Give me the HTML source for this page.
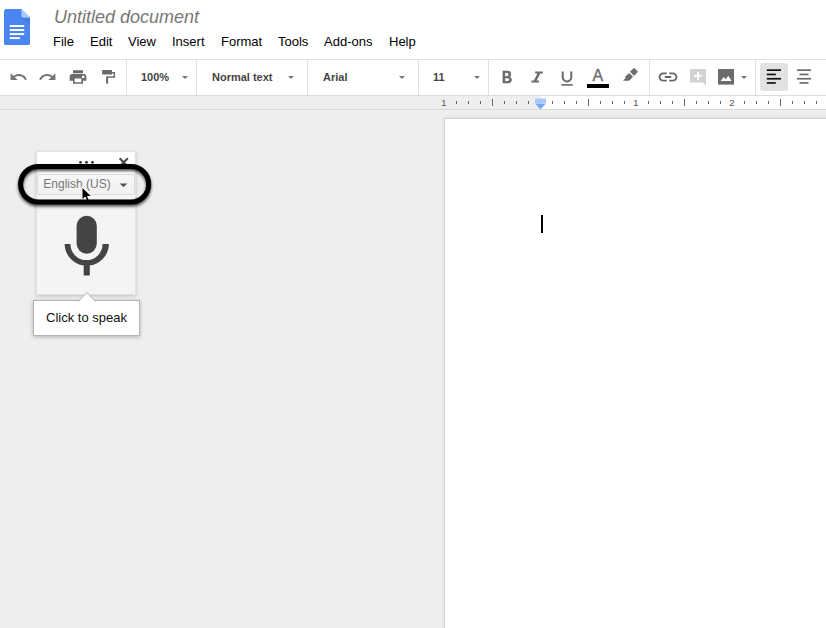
<!DOCTYPE html>
<html lang="en">
<head>
<meta charset="utf-8">
<title>Untitled document</title>
<style>
*{box-sizing:border-box;margin:0;padding:0}
html,body{width:826px;height:628px;overflow:hidden;background:#eeeeee;font-family:"Liberation Sans",Arial,sans-serif;}
.abs{position:absolute}
#header{position:absolute;left:0;top:0;width:826px;height:59px;background:#fff}
#title{position:absolute;left:54px;top:6px;font-size:18px;line-height:22px;font-style:italic;color:#777;white-space:nowrap}
.menu{position:absolute;top:34px;font-size:13px;line-height:16px;color:#000;white-space:nowrap}
#toolbar{position:absolute;left:0;top:59px;width:826px;height:37px;background:#fff;border-top:1px solid #e3e3e3;border-bottom:1px solid #dcdcdc}
.sep{position:absolute;top:0;width:1px;height:35px;background:#e0e0e0}
.tbt{position:absolute;top:11px;font-size:11px;line-height:13px;font-weight:bold;color:#444;white-space:nowrap}
.caret{position:absolute;margin-left:0.6px;top:16px;width:0;height:0;border-left:3px solid transparent;border-right:3px solid transparent;border-top:3px solid #777}
#ruler{position:absolute;left:0;top:96px;width:826px;height:14px;background:#eeeeee;border-bottom:1px solid #d9d9d9}
#rulerw{position:absolute;left:541px;top:0;width:285px;height:13px;background:#fff}
.rn{position:absolute;top:1px;font-size:9px;line-height:11px;color:#444}
#page{position:absolute;left:444px;top:118px;width:400px;height:520px;background:#fff;border:1px solid #d4d4d4;box-shadow:0 0 3px rgba(0,0,0,.12)}
#cursor{position:absolute;left:541px;top:215px;width:2px;height:18px;background:#000}
#panel{position:absolute;left:36px;top:151px;width:100px;height:144px;background:#f4f4f4;border:1px solid #e3e3e3;box-shadow:0 1px 3px rgba(0,0,0,.2)}
#panelhead{position:absolute;left:0;top:0;width:98px;height:22px;background:#fff}
#lang{position:absolute;left:37px;top:174px;width:98px;height:21px;background:linear-gradient(#f7f7f7,#f1f1f1);border:1px solid #dadada;border-radius:2px;font-size:12px;line-height:18.6px;color:#777;padding-left:5.3px}
#tip{position:absolute;left:33px;top:300px;width:107px;height:35.5px;background:#fff;border:1px solid #b4b4b4;box-shadow:0 1px 4px rgba(0,0,0,.25);font-size:13px;line-height:33px;text-align:center;color:#111}
</style>
</head>
<body>
<div id="header">
  <svg class="abs" style="left:4px;top:9px" width="26" height="36.4" viewBox="0 0 27 37" preserveAspectRatio="none">
    <path d="M2.5 0 H18 L27 9 V34.5 Q27 37 24.5 37 H2.5 Q0 37 0 34.5 V2.5 Q0 0 2.5 0 Z" fill="#4a86f0"/>
    <path d="M18 0 L27 9 H20.5 Q18 9 18 6.5 Z" fill="#a9c7fa"/>
    <path d="M18.3 9 H27 V17 Z" fill="#3a6fd0" opacity=".35"/>
    <rect x="6" y="16.3" width="15" height="2" fill="#fff"/>
    <rect x="6" y="20.4" width="15" height="2" fill="#fff"/>
    <rect x="6" y="24.5" width="15" height="2" fill="#fff"/>
    <rect x="6" y="28.6" width="10.6" height="2" fill="#fff"/>
  </svg>
  <div id="title">Untitled document</div>
  <div class="menu" style="left:53px">File</div>
  <div class="menu" style="left:90px">Edit</div>
  <div class="menu" style="left:128px">View</div>
  <div class="menu" style="left:172px">Insert</div>
  <div class="menu" style="left:221px">Format</div>
  <div class="menu" style="left:278px">Tools</div>
  <div class="menu" style="left:324px">Add-ons</div>
  <div class="menu" style="left:389px">Help</div>
</div>

<div id="toolbar">
  <div class="sep" style="left:126px"></div>
  <div class="sep" style="left:196px"></div>
  <div class="sep" style="left:307px"></div>
  <div class="sep" style="left:418px"></div>
  <div class="sep" style="left:488px"></div>
  <div class="sep" style="left:649px"></div>
  <div class="sep" style="left:755px"></div>

  <!-- undo / redo / print / paint format -->
  <svg class="abs" style="left:8.8px;top:8px" width="19" height="18" viewBox="0 0 24 24" preserveAspectRatio="none"><path fill="#757575" d="M12.5 8c-2.65 0-5.05.99-6.9 2.6L2 7v9h9l-3.62-3.62c1.39-1.16 3.16-1.88 5.12-1.88 3.54 0 6.55 2.31 7.6 5.5l2.37-.78C21.08 11.03 17.15 8 12.5 8z"/></svg>
  <svg class="abs" style="left:38.4px;top:8px" width="19" height="18" viewBox="0 0 24 24" preserveAspectRatio="none"><path fill="#757575" d="M18.4 10.6C16.55 8.99 14.15 8 11.5 8c-4.65 0-8.58 3.03-9.96 7.22L3.9 16c1.05-3.19 4.05-5.5 7.6-5.5 1.95 0 3.73.72 5.12 1.88L13 16h9V7l-3.6 3.6z"/></svg>
  <svg class="abs" style="left:68.2px;top:8px" width="20" height="18" viewBox="0 0 24 24" preserveAspectRatio="none"><path fill="#6b6b6b" fill-rule="evenodd" d="M19 8H5c-1.66 0-3 1.34-3 3v6h4v4h12v-4h4v-6c0-1.66-1.34-3-3-3z M16 19H8v-5h8z M16.8 10.4h2.8v2.8h-2.8z M18 3H6v4h12z"/></svg>
  <svg class="abs" style="left:100px;top:8px" width="18" height="18" viewBox="0 0 18 18"><rect x="2.1" y="1.9" width="9.9" height="4.7" rx="0.4" fill="#6b6b6b"/><path d="M12 4.7 H14.3 V9.1 H7.1" fill="none" stroke="#6b6b6b" stroke-width="1.5"/><rect x="6.1" y="8.5" width="2" height="7.2" fill="#6b6b6b"/></svg>
  <!-- B I U A -->
  <div class="abs" style="left:502px;top:8.4px;font-size:16.2px;line-height:18px;font-weight:bold;color:#6b6b6b;-webkit-text-stroke:0.6px #6b6b6b;transform:scaleX(.86);transform-origin:0 0">B</div>
  <svg class="abs" style="left:531px;top:11px" width="12" height="12" viewBox="0 0 12 12"><path fill="#6b6b6b" d="M4.2 0.4 H11.8 V2.4 H9.3 L5.7 9.5 H8 V11.5 H0.4 V9.5 H2.9 L6.5 2.4 H4.2 Z"/></svg>
  <svg class="abs" style="left:561px;top:11px" width="12" height="16" viewBox="0 0 12 16"><path fill="none" stroke="#6b6b6b" stroke-width="2" d="M1.7 0.4 V6.1 A4.3 4.3 0 0 0 10.3 6.1 V0.4"/><rect x="0.3" y="13.1" width="11.4" height="1.6" fill="#6b6b6b"/></svg>
  <div class="abs" style="left:592.6px;top:7px;font-size:16px;line-height:18px;color:#6b6b6b;-webkit-text-stroke:0.3px #6b6b6b">A</div>
  <div class="abs" style="left:587px;top:24px;width:22px;height:4px;background:#000"></div>
  <!-- highlighter -->
  <svg class="abs" style="left:622px;top:6px" width="18" height="16" viewBox="0 0 18 16"><g fill="#6b6b6b" stroke="#6b6b6b" stroke-width="0.8" stroke-linejoin="round"><path d="M12 2.2 L15.6 5.8 L12 9.4 L8.4 5.8 Z"/><path d="M7.3 7.5 L10.6 10.8 L7.3 14.3 L1.6 14.3 L3.9 12.5 L3.7 10.6 Z"/></g></svg>
  <!-- link -->
  <svg class="abs" style="left:657px;top:8px" width="22" height="18" viewBox="0 0 22 18"><path fill="none" stroke="#666" stroke-width="1.9" d="M9.7 5.4 H6.2 A3.6 3.6 0 0 0 6.2 12.6 H9.7 M12.3 5.4 H15.8 A3.6 3.6 0 0 1 15.8 12.6 H12.3 M7.8 9 H14.2"/></svg>
  <!-- add comment (disabled) -->
  <svg class="abs" style="left:690px;top:9px" width="17" height="18" viewBox="0 0 17 18"><path fill="#d2d2d2" d="M0 0 H16 V16.8 L12.6 13.4 H0 Z"/><path fill="#fff" d="M7 2.8 H9.1 V5.7 H12 V7.8 H9.1 V10.7 H7 V7.8 H4.1 V5.7 H7 Z"/></svg>
  <!-- image -->
  <svg class="abs" style="left:718px;top:9px" width="16" height="16" viewBox="0 0 16 16"><rect width="16" height="15.6" fill="#6b6b6b"/><path fill="#fff" d="M2.6 12 L5.8 8 L7.6 10.2 L10.4 6.8 L13.6 12 Z"/></svg>
  <div class="caret" style="left:740px;top:16px"></div>
  <!-- align left (active) -->
  <div class="abs" style="left:760px;top:3px;width:28px;height:28px;background:#e2e2e2;border-radius:3px"></div>
  <svg class="abs" style="left:766px;top:9px" width="16" height="16" viewBox="0 0 16 16"><g fill="#111"><rect x="0.8" y="0.3" width="14.2" height="1.7"/><rect x="0.8" y="4.6" width="9" height="1.7"/><rect x="0.8" y="8.9" width="14.2" height="1.7"/><rect x="0.8" y="13.1" width="9" height="1.7"/></g></svg>
  <!-- align center -->
  <svg class="abs" style="left:796px;top:9px" width="16" height="16" viewBox="0 0 16 16"><g fill="#6b6b6b"><rect x="1" y="0.3" width="14" height="1.7"/><rect x="3.5" y="4.6" width="9" height="1.7"/><rect x="1" y="8.9" width="14" height="1.7"/><rect x="3.5" y="13.1" width="9" height="1.7"/></g></svg>
  <div class="tbt" style="left:141px">100%</div><div class="caret" style="left:181px"></div>
  <div class="tbt" style="left:212px">Normal text</div><div class="caret" style="left:287px"></div>
  <div class="tbt" style="left:323px">Arial</div><div class="caret" style="left:398px"></div>
  <div class="tbt" style="left:433px">11</div><div class="caret" style="left:473px"></div>
</div>

<div id="ruler">
  <div id="rulerw"></div>
  <svg class="abs" style="left:0;top:0" width="826" height="14" viewBox="0 0 826 14"><g fill="#666"><rect x="456" y="5" width="1" height="3"/><rect x="468" y="5" width="1" height="3"/><rect x="480" y="5" width="1" height="3"/><rect x="492" y="3" width="1" height="7"/><rect x="504" y="5" width="1" height="3"/><rect x="516" y="5" width="1" height="3"/><rect x="528" y="5" width="1" height="3"/><rect x="552" y="5" width="1" height="3"/><rect x="564" y="5" width="1" height="3"/><rect x="576" y="5" width="1" height="3"/><rect x="588" y="3" width="1" height="7"/><rect x="600" y="5" width="1" height="3"/><rect x="612" y="5" width="1" height="3"/><rect x="624" y="5" width="1" height="3"/><rect x="648" y="5" width="1" height="3"/><rect x="660" y="5" width="1" height="3"/><rect x="672" y="5" width="1" height="3"/><rect x="684" y="3" width="1" height="7"/><rect x="696" y="5" width="1" height="3"/><rect x="708" y="5" width="1" height="3"/><rect x="720" y="5" width="1" height="3"/><rect x="744" y="5" width="1" height="3"/><rect x="756" y="5" width="1" height="3"/><rect x="768" y="5" width="1" height="3"/><rect x="780" y="3" width="1" height="7"/><rect x="792" y="5" width="1" height="3"/><rect x="804" y="5" width="1" height="3"/><rect x="816" y="5" width="1" height="3"/></g>
    <g font-family="Liberation Sans, Arial, sans-serif" font-size="9.5" fill="#555" text-anchor="middle">
      <text x="444" y="10">1</text><text x="636" y="10">1</text><text x="732" y="10">2</text>
    </g>
    <rect x="535" y="2.5" width="11" height="4.5" fill="#a9c7fa"/>
    <path d="M535 7.5 H546 L540.5 13.5 Z" fill="#78a6f4"/>
  </svg>
</div>

<div id="page"></div>
<div id="cursor"></div>

<div id="panel"><div id="panelhead"></div>
  <svg class="abs" style="left:-1px;top:0" width="100" height="143" viewBox="0 0 100 143">
    <g fill="#333"><circle cx="44.5" cy="10.3" r="1.4"/><circle cx="50.5" cy="10.3" r="1.4"/><circle cx="56.5" cy="10.3" r="1.4"/></g>
    <path d="M83.6 6.2 L91.8 14.4 M91.8 6.2 L83.6 14.4" stroke="#4a4a4a" stroke-width="2.1" fill="none"/>
    <g fill="#444"><rect x="40.6" y="63.7" width="20.2" height="38" rx="10.1"/><path d="M28.6 92 H34.4 A16.1 16.1 0 0 0 66.6 92 H72.9 A22.15 22.15 0 0 1 53.8 113.6 V123.6 H47.7 V113.6 A22.15 22.15 0 0 1 28.6 92 Z"/></g>
  </svg>
</div>
<div id="lang">English (US)<svg class="abs" style="left:80.7px;top:8.2px" width="9" height="5" viewBox="0 0 9 5"><path d="M0.6 0.4 H8.4 L4.5 4.3 Z" fill="#555"/></svg></div>
<svg class="abs" style="left:79.9px;top:184.9px" width="15.3" height="20" viewBox="0 0 13 17"><path d="M1.6 1.4 V13.2 L4.4 10.6 L6.4 15.2 L8.6 14.2 L6.6 9.8 H10.4 Z" fill="#000" stroke="#fff" stroke-width="1" stroke-linejoin="round"/></svg>
<svg class="abs" style="left:10px;top:156px;filter:drop-shadow(0 2.4px 1.8px rgba(0,0,0,.7))" width="150" height="58" viewBox="0 0 150 58"><rect x="10.6" y="10.4" width="128.1" height="35.7" rx="17.85" fill="none" stroke="#000" stroke-width="5"/></svg>
<div id="tip">Click to speak</div>
<svg class="abs" style="left:77px;top:291px" width="20" height="11" viewBox="0 0 20 11"><path d="M1.5 10.5 L10 1.5 L18.5 10.5" fill="#fff" stroke="#b4b4b4" stroke-width="1"/><rect x="2" y="10" width="16" height="1" fill="#fff"/></svg>
</body>
</html>
